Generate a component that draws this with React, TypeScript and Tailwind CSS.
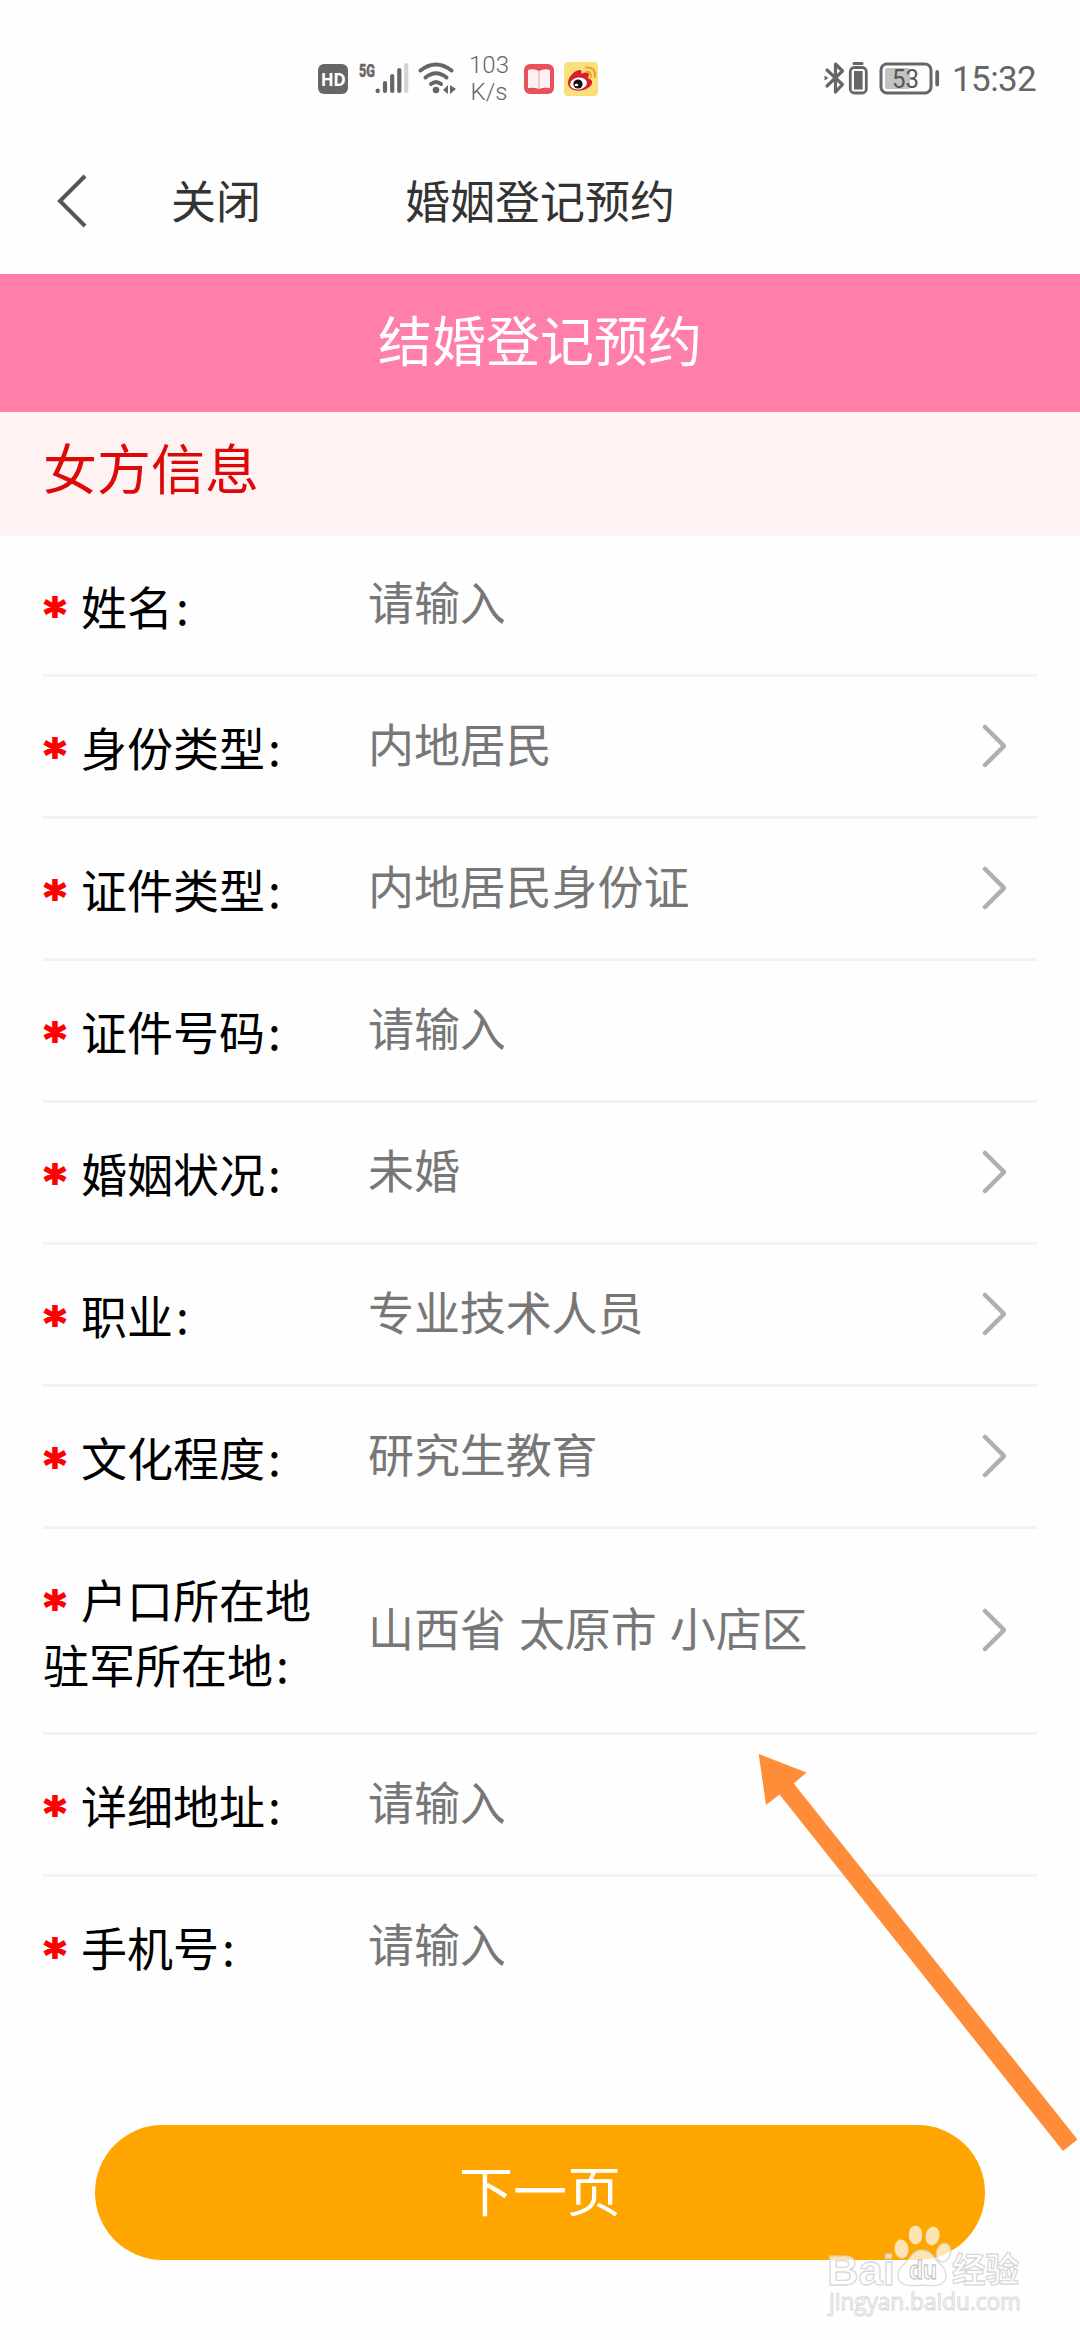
import React from "react";

type Field = { label: string; label2?: string; value: string; select?: boolean };

const fields: Field[] = [
  { label: "姓名:", value: "请输入" },
  { label: "身份类型:", value: "内地居民", select: true },
  { label: "证件类型:", value: "内地居民身份证", select: true },
  { label: "证件号码:", value: "请输入" },
  { label: "婚姻状况:", value: "未婚", select: true },
  { label: "职业:", value: "专业技术人员", select: true },
  { label: "文化程度:", value: "研究生教育", select: true },
  { label: "户口所在地", label2: "驻军所在地:", value: "山西省 太原市 小店区", select: true },
  { label: "详细地址:", value: "请输入" },
  { label: "手机号:", value: "请输入" },
];

function StatusBar() {
  return (
    <div className="flex h-[108px] items-start pt-[50px] pl-[318px] pr-[44px] font-['Roboto',sans-serif] text-[#666]">
      <div className="mt-[14px] flex h-[30px] w-[30px] items-center justify-center rounded-[6px] bg-[#666] font-['Open_Sans',sans-serif] text-[17px] leading-none font-bold tracking-[-0.5px] text-white">
        HD
      </div>
      {/* cellular and wifi */}
      <svg className="ml-[10px] mt-[10px]" width="100" height="36" viewBox="358 60 100 36">
        <text x="359" y="76.500" fontSize="18" fontWeight="800" textLength="16" lengthAdjust="spacingAndGlyphs" fill="#666" stroke="#666" strokeWidth="0.500" fontFamily="Roboto, sans-serif">5G</text>
        <g strokeWidth="4.2" strokeLinecap="round" stroke="#666">
          <path d="M377.7 90.6v.6M385 83v8M392.2 76v15M399.3 70v21" />
          <path d="M406.2 65v26" stroke="#d4d4d4" />
        </g>
        <g fill="none" stroke="#666" strokeWidth="4" strokeLinecap="round">
          <path d="M420.500 70.500Q436 58.500 451.500 70.500" />
          <path d="M425.500 77.500Q436 69 446.500 77.500" />
          <path d="M431 84Q436 80 441 84" />
        </g>
        <circle cx="436" cy="90" r="3.300" fill="#666" />
        <path d="M443 90l5-5v9zM450 85v9l6-5z" fill="#666" />
      </svg>
      <div className="ml-[11px] mt-[2px] w-[40px] text-center text-[24px] leading-[27px] font-light">
        <div>103</div>
        <div>K/s</div>
      </div>
      <svg className="ml-[14px] mt-[14px]" width="32" height="30" viewBox="0 0 32 30">
        <rect x="1" width="30" height="30" rx="6" fill="#e8505b" />
        <path d="M5 6q6-2 11 1q5-3 11-1v18q-6-1-11 1q-5-2-11-1z" fill="#fff0f1" />
        <path d="M16 7v18" stroke="#eebdc6" strokeWidth="1.500" />
      </svg>
      <svg className="ml-[9px] mt-[12px]" width="34" height="34" viewBox="0 0 34 34">
        <rect width="34" height="34" rx="4" fill="#fbdf7c" />
        <path d="M4 21C4 15 10 9 15 8c3 0 3 2 2 4c4-2 8-2 8 1l-1 3c6 2 5 7 0 10c-8 5-20 3-20-5z" fill="#d6202b" />
        <ellipse cx="14.500" cy="21.500" rx="8.500" ry="6" fill="#fff" transform="rotate(-8 14.500 21.500)" />
        <circle cx="14" cy="22" r="4.600" fill="#111" />
        <ellipse cx="12.500" cy="23" rx="1.800" ry="1.300" fill="#fff" />
        <path d="M22.500 10q5-.5 4.500 5M22 5.500q10-.5 9 9.500" fill="none" stroke="#efa22c" strokeWidth="2.200" strokeLinecap="round" />
      </svg>
      <div className="grow" />
      {/* bluetooth, device battery, phone battery */}
      <svg className="mt-[10px]" width="118" height="36" viewBox="823 60 118 36">
        <path d="M827 70l15.500 14.500L835.500 92V64l7 7L827 86" fill="none" stroke="#666" strokeWidth="3.200" strokeLinejoin="round" strokeLinecap="round" />
        <path d="M824.500 75.500l4 2.500-4 2.500z" fill="#666" />
        <path d="M854 63.500h8" stroke="#666" strokeWidth="3" strokeLinecap="round" />
        <rect x="850.300" y="67.500" width="16" height="25.500" rx="4" fill="none" stroke="#666" strokeWidth="2.800" />
        <rect x="854" y="71" width="8.600" height="18.500" fill="#666" />
        <rect x="881" y="64" width="50" height="29" rx="6" fill="none" stroke="#666" strokeWidth="3" />
        <rect x="885" y="68" width="25" height="21" rx="2" fill="#c2c2c2" />
        <text x="905.500" y="87.500" fontSize="25" textAnchor="middle" textLength="27" lengthAdjust="spacingAndGlyphs" fill="#555" fontFamily="Roboto, sans-serif">53</text>
        <path d="M937.200 72v12.500" stroke="#666" strokeWidth="3.800" strokeLinecap="round" />
      </svg>
      <div className="ml-[11px] mt-[9px] w-[84px] text-[35px] leading-[41px] tracking-[-0.6px] whitespace-nowrap">15:32</div>
    </div>
  );
}

function Label({ text }: { text: string }) {
  const hasColon = text.endsWith(":");
  return (
    <span>
      {hasColon ? text.slice(0, -1) : text}
      {hasColon && <span className="pl-[3px]">:</span>}
    </span>
  );
}

function FieldRow({ field, first, last }: { field: Field; first: boolean; last: boolean }) {
  const height = field.label2 ? "h-[206px]" : first ? "h-[141px]" : "h-[142px]";
  return (
    <div className={`mx-[43px] flex items-center border-b-[3px] text-[46px] ${height} ${last ? "border-transparent" : "border-[#f2f2f2]"}`}>
      <div className="w-[325px] leading-[65px] whitespace-nowrap text-black">
        <div className="flex">
          <span className="w-[38px] translate-y-[9px] pl-px font-['DejaVu_Sans',sans-serif] text-[42px] font-bold text-[#f00] [-webkit-text-stroke:2px_#f00]">*</span>
          <Label text={field.label} />
        </div>
        {field.label2 && <Label text={field.label2} />}
      </div>
      <div className="grow pb-[10px] leading-[60px] tracking-[-0.1px] whitespace-nowrap text-[#777] [word-spacing:3px]">{field.value}</div>
      {field.select && (
        <svg className="mr-[31px] mb-[2px]" width="24" height="44" viewBox="0 0 24 44">
          <path d="M3 3l19 19L3 41" fill="none" stroke="#afafaf" strokeWidth="4.500" strokeLinecap="round" />
        </svg>
      )}
    </div>
  );
}

function Watermark() {
  return (
    <svg className="absolute top-[2215px] left-[820px]" width="210" height="110" viewBox="820 2215 210 110">
      <g fill="#fff" fillOpacity="0.7" stroke="#cfcfcf" strokeWidth="1.300" strokeOpacity="0.8">
        <text x="827" y="2284.500" fontSize="43" fontWeight="700" textLength="68" lengthAdjust="spacingAndGlyphs" fontFamily="Liberation Sans, sans-serif">Bai</text>
        <ellipse cx="901.500" cy="2249" rx="7" ry="9.500" stroke="none" transform="rotate(-8 901.500 2249)" />
        <ellipse cx="915.500" cy="2235" rx="6.800" ry="9.500" stroke="none" />
        <ellipse cx="932.500" cy="2236" rx="7" ry="9.500" stroke="none" transform="rotate(12 932.500 2236)" />
        <ellipse cx="943.500" cy="2252.500" rx="7" ry="9.500" transform="rotate(15 943.500 2252.500)" />
        <path d="M922 2250c9 0 11 7 17 13c7 6 9 11 6 17c-4 7-13 6-23 5c-10 1-19 2-23-5c-3-6-1-11 6-17c6-6 8-13 17-13z" />
        <text x="909" y="2279" fontSize="25" fontWeight="700" textLength="28" lengthAdjust="spacingAndGlyphs" stroke="#bdbdbd" fontFamily="Liberation Sans, sans-serif">du</text>
        <text x="952" y="2281.500" fontSize="34" fontWeight="700" textLength="67" lengthAdjust="spacingAndGlyphs" fontFamily="Noto Sans CJK SC, sans-serif">经验</text>
        <text x="829" y="2309.500" fontSize="23" strokeWidth="1" textLength="192" lengthAdjust="spacingAndGlyphs" fontFamily="Open Sans, sans-serif">jingyan.baidu.com</text>
      </g>
    </svg>
  );
}

export default function App() {
  return (
    <div className="relative flex h-[2340px] w-[1080px] flex-col overflow-hidden bg-[#fefefe] font-['Noto_Sans_CJK_SC',sans-serif]">
      <StatusBar />
      <header className="flex h-[166px] items-start pt-[65px] pl-[57px] text-[45px] leading-[54px] text-[#333]">
        <svg className="mt-px" width="30" height="54" viewBox="0 0 30 54">
          <path d="M28 2L3 27l25 25" fill="none" stroke="#555" strokeWidth="4" />
        </svg>
        <span className="ml-[84px]">关闭</span>
        <span className="ml-[144px]">婚姻登记预约</span>
      </header>
      <div className="flex h-[138px] items-center justify-center bg-[#ff7fa9] pb-[8px] text-[54px] leading-[80px] text-white">结婚登记预约</div>
      <div className="flex h-[124px] items-center bg-[#fff2f2] pb-[14px] pl-[43px] text-[54px] leading-[80px] text-[#dc0909]">女方信息</div>
      <main>
        {fields.map((f, i) => (
          <FieldRow key={f.label} field={f} first={i === 0} last={i === fields.length - 1} />
        ))}
      </main>
      <button className="mx-[95px] mt-[106px] h-[135px] rounded-full bg-[#ffa500] pb-[8px] text-[54px] leading-[80px] text-white">下一页</button>
      <svg className="absolute top-[1750px] left-[750px]" width="330" height="405" viewBox="750 1750 330 405">
        <path d="M758.700 1754L806.500 1772.500L793.700 1783.500L1077.500 2139.500L1063 2151L779.500 1794.500L766 1805Z" fill="#ff8c38" />
      </svg>
      <Watermark />
    </div>
  );
}
